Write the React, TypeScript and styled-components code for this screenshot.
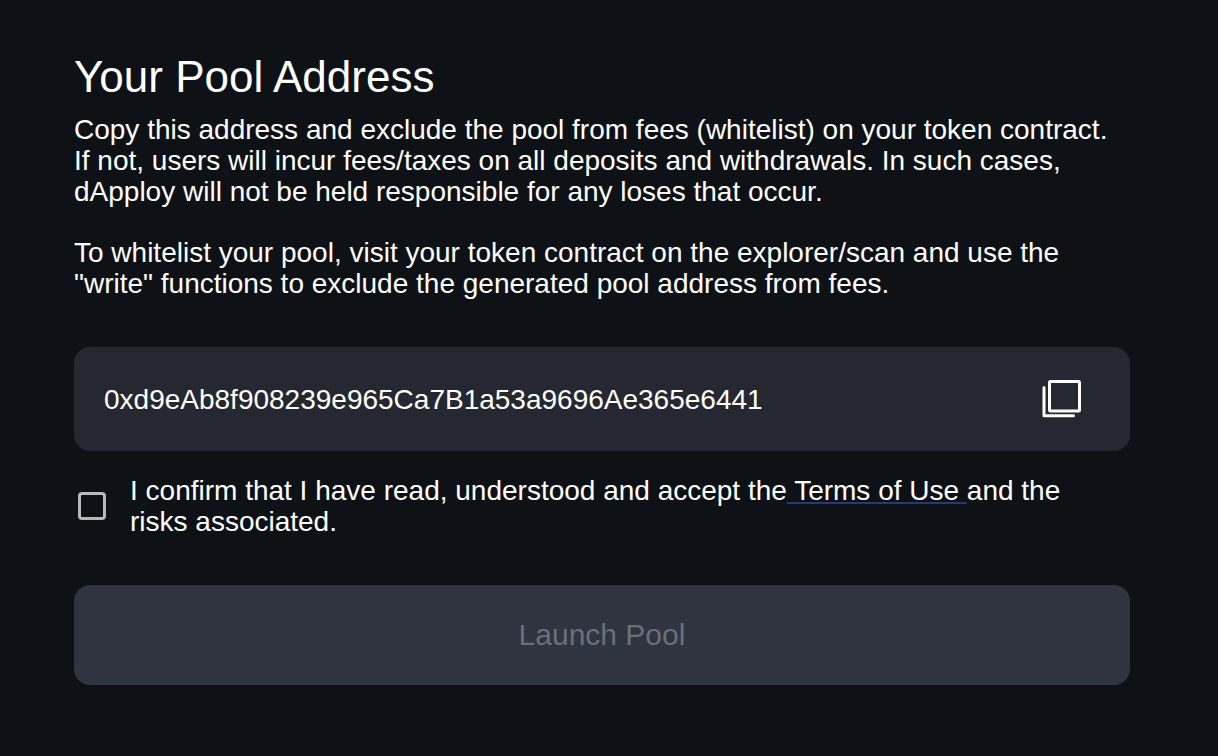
import React, { useState } from "react";
import styled, { createGlobalStyle } from "styled-components";

const GlobalStyle = createGlobalStyle`
  *, *::before, *::after { box-sizing: border-box; }
  body {
    margin: 0;
    background: #0e1116;
    color: #fff;
    font-family: "Liberation Sans", Arial, Helvetica, sans-serif;
  }
`;

const Page = styled.main`
  min-height: 100vh;
  padding: 52px 88px 52px 74px;
  display: flex;
  flex-direction: column;
`;

const Title = styled.h1`
  margin: 0 0 12px;
  font-size: 44px;
  line-height: 50px;
  font-weight: 400;
`;

const Paragraph = styled.p`
  margin: 0 0 30px;
  font-size: 28px;
  line-height: 31px;
`;

const AddressBox = styled.div`
  margin-top: 18px;
  min-height: 104px;
  padding: 0 46px 0 30px;
  display: flex;
  align-items: center;
  justify-content: space-between;
  border-radius: 16px;
  background: #252831;
  font-size: 28px;
  line-height: 31px;
`;

const CopyButton = styled.button`
  padding: 0;
  border: 0;
  background: none;
  color: #fff;
  display: flex;
  cursor: pointer;
`;

const ConfirmRow = styled.div`
  margin-top: 24px;
  padding: 0 24px 0 4px;
  display: flex;
  align-items: center;
  gap: 24px;
  font-size: 28px;
  line-height: 31px;
`;

const Checkbox = styled.input`
  appearance: none;
  flex: none;
  width: 28px;
  height: 28px;
  margin: 0;
  border: 3px solid #b7b8b9;
  border-radius: 4px;
  background: transparent;
  cursor: pointer;
  &:checked { background: #b7b8b9; }
`;

const TermsLink = styled.a`
  color: inherit;
  text-decoration: underline 2px #223a7a;
  text-decoration-skip-ink: none;
  text-underline-offset: 2px;
`;

const LaunchButton = styled.button`
  margin-top: 48px;
  min-height: 100px;
  width: 100%;
  border: 0;
  border-radius: 16px;
  background: #2e3440;
  color: #6c6f78;
  font-family: inherit;
  font-size: 30px;
  line-height: 34px;
`;

const address = "0xd9eAb8f908239e965Ca7B1a53a9696Ae365e6441";

export default function App() {
  const [accepted, setAccepted] = useState(false);
  return (
    <>
      <GlobalStyle />
      <Page>
        <Title>Your Pool Address</Title>
        <Paragraph>
          Copy this address and exclude the pool from fees (whitelist) on your token contract.
          If not, users will incur fees/taxes on all deposits and withdrawals. In such cases,
          dApploy will not be held responsible for any loses that occur.
        </Paragraph>
        <Paragraph>
          To whitelist your pool, visit your token contract on the explorer/scan and use the
          "write" functions to exclude the generated pool address from fees.
        </Paragraph>
        <AddressBox>
          <span>{address}</span>
          <CopyButton
            type="button"
            aria-label="Copy address"
            onClick={() => navigator.clipboard?.writeText(address)}
          >
            <svg width="44" height="44" viewBox="0 0 44 44" fill="none" stroke="currentColor" strokeWidth="3" strokeLinejoin="round" strokeLinecap="round">
              <rect x="9.5" y="4.5" width="30" height="29.5" rx="1" />
              <path d="M4 10.5v28.3h29.5" />
            </svg>
          </CopyButton>
        </AddressBox>
        <ConfirmRow>
          <Checkbox
            id="accept"
            type="checkbox"
            checked={accepted}
            onChange={(e) => setAccepted(e.target.checked)}
          />
          <label htmlFor="accept">
            I confirm that I have read, understood and accept the
            <TermsLink href="#terms"> Terms of Use </TermsLink>
            and the risks associated.
          </label>
        </ConfirmRow>
        <LaunchButton type="button" disabled={!accepted}>Launch Pool</LaunchButton>
      </Page>
    </>
  );
}
